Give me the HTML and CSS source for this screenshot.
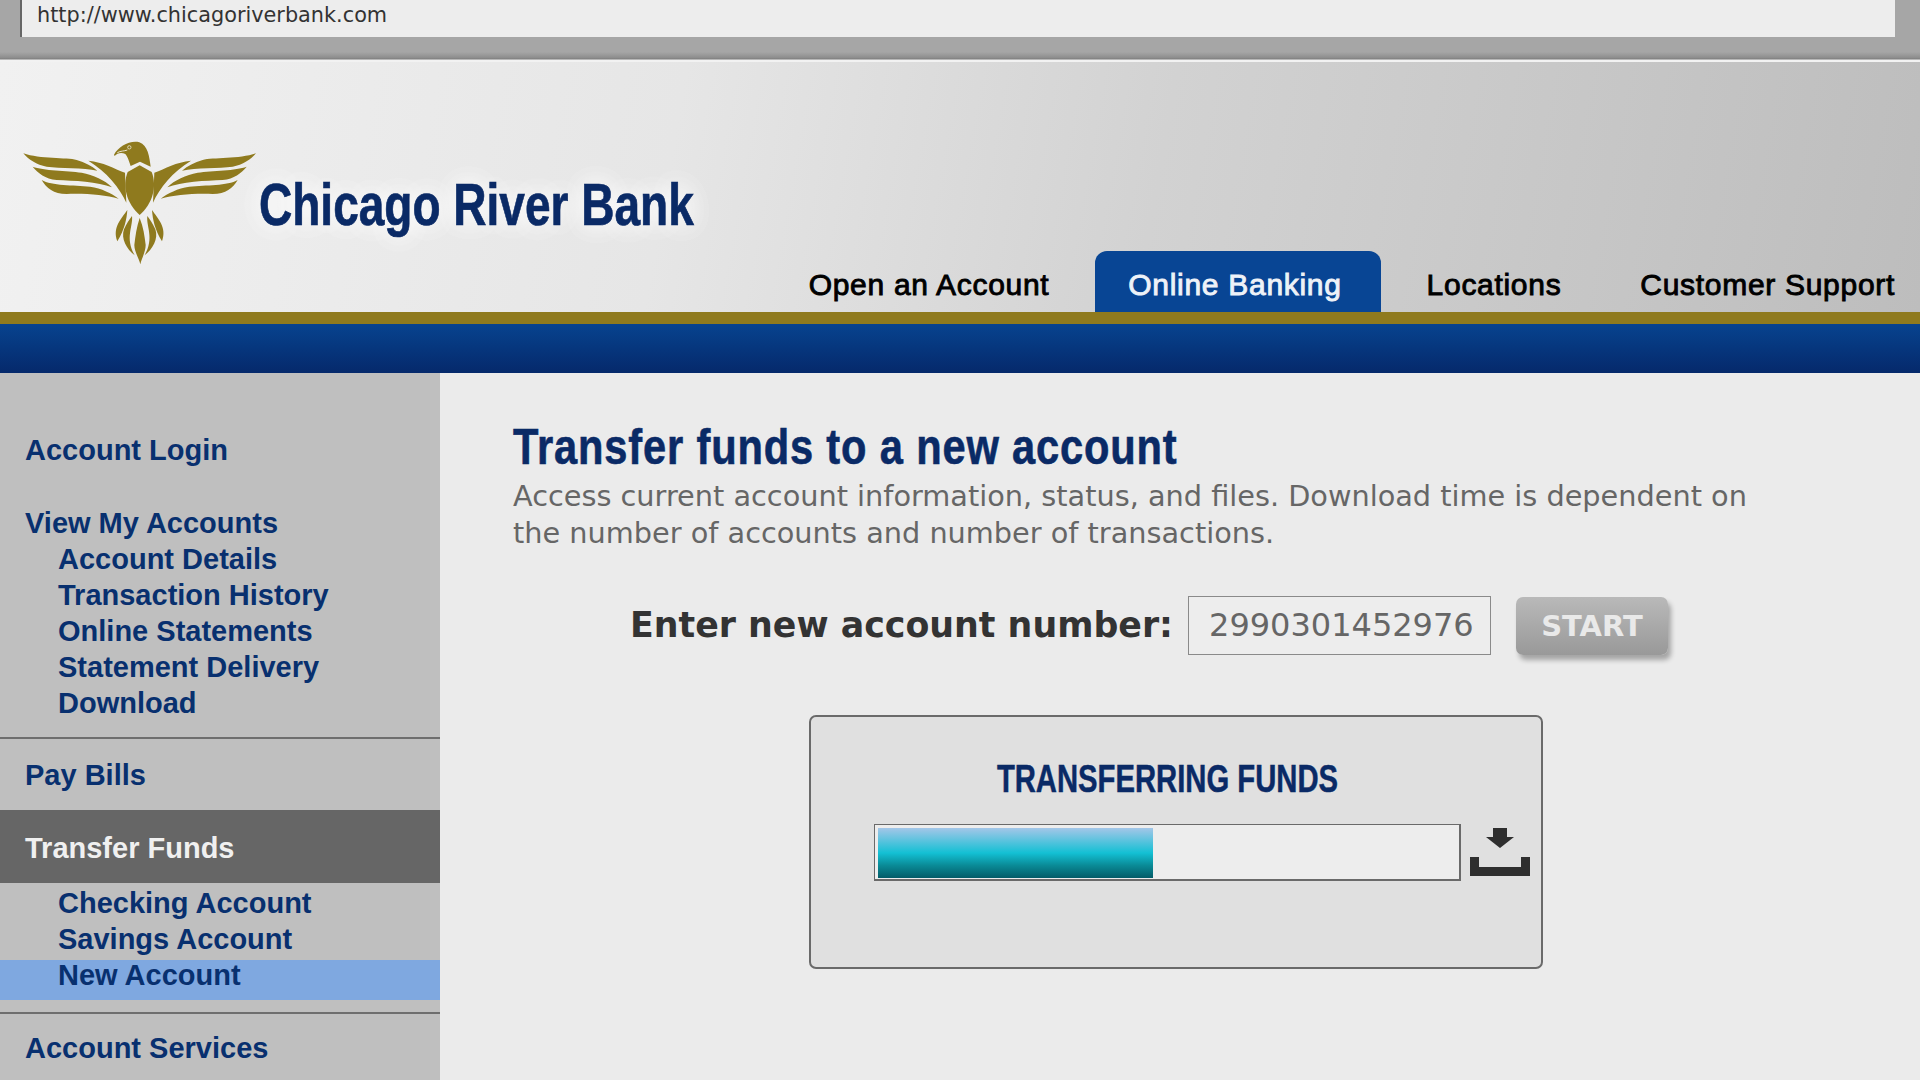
FILE: index.html
```html
<!DOCTYPE html>
<html lang="en">
<head>
<meta charset="utf-8">
<title>Chicago River Bank</title>
<link rel="stylesheet" href="styles.css">
</head>
<body>
<div class="browser-bar"><div class="url">http://www.chicagoriverbank.com</div></div>
<header class="site-header">
  <div class="logo">
    <svg class="eagle" viewBox="0 0 780 420" aria-hidden="true">
      <defs>
        <g id="half">
          <path d="M40 70C90 88 170 82 200 90C225 97 245 108 262 122C220 112 150 116 110 110C80 105 55 88 40 70Z"/>
          <path d="M68 110C100 122 170 122 215 128C250 135 285 150 306 172C265 155 190 152 140 150C105 146 85 130 68 110Z"/>
          <path d="M95 150C125 168 190 165 240 170C275 175 305 190 326 206C285 195 230 190 170 192C130 192 110 175 95 150Z"/>
          <path d="M235 92C280 96 312 116 345 128L349 218C330 175 290 125 235 92Z"/>
          <path d="M352 240C335 265 306 292 322 334C344 298 350 268 352 240Z"/>
          <path d="M366 258C370 290 344 322 374 376C350 358 332 326 342 298C350 280 358 268 366 258Z"/>
        </g>
      </defs>
      <use href="#half"/>
      <use href="#half" transform="translate(778 0) scale(-1 1)"/>
      <path d="M389 106L425 126C442 170 428 220 389 255C350 220 336 170 353 126Z"/>
      <path d="M312 74C325 50 360 30 388 37C414 46 418 80 422 110L390 95L362 108C356 90 352 78 346 72C335 66 322 68 314 78Z"/>
      <path d="M389 264C400 290 404 320 407 345C407 365 395 385 391 403C387 385 373 365 373 345C376 320 380 290 389 264Z"/>
      <circle class="eye" cx="358" cy="52" r="5"/>
      <path class="beak" d="M322 68C332 62 342 64 352 60"/>
    </svg>
    <span class="logo-text">Chicago River Bank</span>
  </div>
  <nav class="tabs">
    <a class="tab">Open an Account</a>
    <a class="tab active">Online Banking</a>
    <a class="tab">Locations</a>
    <a class="tab last">Customer Support</a>
  </nav>
</header>
<div class="gold"></div>
<div class="blue"></div>
<div class="layout">
  <aside class="sidebar">
    <a class="top first">Account Login</a>
    <a class="top gap">View My Accounts</a>
    <a class="sub">Account Details</a>
    <a class="sub">Transaction History</a>
    <a class="sub">Online Statements</a>
    <a class="sub">Statement Delivery</a>
    <a class="sub">Download</a>
    <hr class="rule rule-a">
    <a class="top bills">Pay Bills</a>
    <a class="current">Transfer Funds</a>
    <a class="sub after">Checking Account</a>
    <a class="sub">Savings Account</a>
    <a class="sub selected">New Account</a>
    <hr class="rule rule-b">
    <a class="top services">Account Services</a>
  </aside>
  <main class="content">
    <h1>Transfer funds to a new account</h1>
    <p class="lead">Access current account information, status, and files. Download time is dependent on the number of accounts and number of transactions.</p>
    <div class="form-row">
      <label class="field-label">Enter new account number:</label>
      <div class="field">2990301452976</div>
      <div class="start">START</div>
    </div>
    <section class="panel">
      <h2>TRANSFERRING FUNDS</h2>
      <div class="progress-row">
        <div class="track"><div class="fill"></div></div>
        <svg class="dl" viewBox="0 0 60 48" aria-hidden="true">
          <path d="M23 0H37V9H44L30 20L16 9H23Z"/>
          <path d="M0 29H9V39H51V29H60V48H0Z"/>
        </svg>
      </div>
    </section>
  </main>
</div>
</body>
</html>
```
FILE: styles.css
```css
* { box-sizing: border-box; }
html, body { margin: 0; height: 1080px; overflow: hidden; }
body { background: #ebebeb; font-family: "Liberation Sans", Arial, sans-serif; display: flex; flex-direction: column; }

.browser-bar { height: 62px; flex: none; background: linear-gradient(#a6a6a6 0 52px, #8c8c8c 58px, #7d7d7d 59px, #f2f2f2 60px); padding: 0 25px 0 20px; }
.url { height: 37px; background: #ededed; border-left: 2px solid #666; padding-left: 15px; font: 20.8px/30px "DejaVu Sans", sans-serif; color: #333; }

.site-header { height: 250px; flex: none; display: flex; justify-content: space-between; align-items: flex-end; background: linear-gradient(100deg, #f1f1f1 0%, #e6e6e6 35%, #d2d2d2 60%, #bdbdbd 100%); padding-left: 10px; }
.logo { display: flex; align-items: flex-start; align-self: flex-start; padding-top: 68px; width: 720px; flex: none; }
.eagle { width: 260px; height: 140px; fill: #8f7a1e; flex: none; }
.eye { fill: none; stroke: #e8e4d0; stroke-width: 2.5; }
.beak { fill: none; stroke: #e8e4d0; stroke-width: 3; }
.logo-text { font: bold 59px/70px "Liberation Sans", sans-serif; color: #0a2a66; margin: 40px 0 0 -11px; -webkit-text-stroke: .7px currentColor; text-shadow: 0 0 30px #fff, 0 0 30px #fff; white-space: nowrap; transform: scaleX(.78); transform-origin: left center; }

.tabs { display: flex; align-items: flex-end; gap: 13px; height: 61px; flex: none; }
.tab { padding: 0 33px; height: 61px; font-size: 30px; line-height: 67px; letter-spacing: .7px; -webkit-text-stroke: .9px currentColor; color: #000; white-space: nowrap; }
.tab.active { background: #084594; color: #eef2f8; border-radius: 12px 12px 0 0; padding-right: 39px; }
.tab.last { padding-right: 25px; }

.gold { height: 12px; flex: none; background: #8f7a1e; }
.blue { height: 49px; flex: none; background: linear-gradient(#07438f, #05296b); }

.layout { flex: 1; display: flex; min-height: 0; }
.sidebar { width: 440px; flex: none; background: #bfbfbf; display: flex; flex-direction: column; font-size: 29px; font-weight: bold; color: #08306f; overflow: hidden; }
.sidebar a { display: block; height: 36px; line-height: 36px; white-space: nowrap; }
.top { padding-left: 25px; }
.first { margin-top: 59px; }
.gap { margin-top: 37px; }
.sub { padding-left: 58px; }
.rule { height: 2px; margin: 0; border: 0; background: #6e6e6e; flex: none; }
.rule-a { margin-top: 16px; }
.bills { margin-top: 18px; }
.sidebar .current { background: #666; color: #f0f0f0; height: 73px; line-height: 76px; padding-left: 25px; margin-top: 17px; }
.after { margin-top: 2px; }
.sidebar .selected { background: #7fa8e0; height: 40px; line-height: 30px; margin-top: 3px; }
.rule-b { margin-top: 12px; }
.services { margin-top: 16px; }

.content { flex: 1; padding: 47px 0 0 73px; min-width: 0; }
h1 { margin: 0; font: bold 50px/54px "Liberation Sans", sans-serif; color: #0a2a66; letter-spacing: 1px; -webkit-text-stroke: .6px currentColor; white-space: nowrap; transform: scaleX(.833); transform-origin: left center; }
.lead { margin: 4px 0 0; width: 1270px; font: 28.75px/37px "DejaVu Sans", sans-serif; color: #666; }
.form-row { display: flex; align-items: center; margin: 44px 0 0 117px; }
.field-label { font: bold 34.8px/59px "DejaVu Sans", sans-serif; color: #333; white-space: nowrap; margin-right: 15px; }
.field { width: 303px; height: 59px; border: 1px solid #8a8a8a; background: #ededed; color: #666; font: 32px/57px "DejaVu Sans", sans-serif; padding-left: 20px; flex: none; }
.start { width: 152px; height: 58px; margin-left: 25px; border-radius: 7px; background: linear-gradient(#b9b9b9, #999); box-shadow: 3px 5px 5px rgba(0,0,0,.3); color: #e9e9e9; font: bold 29px/59px "DejaVu Sans", sans-serif; text-align: center; flex: none; }

.panel { width: 734px; height: 254px; margin: 60px 0 0 296px; background: #e0e0e0; border: 2px solid #6a6a6a; border-radius: 7px; padding: 37px 0 0 63px; }
h2 { margin: 0; width: 587px; text-align: center; font: bold 39px/50px "Liberation Sans", sans-serif; color: #0a2a66; -webkit-text-stroke: .5px currentColor; white-space: nowrap; transform: scaleX(.75); }
.progress-row { display: flex; align-items: flex-start; margin-top: 20px; }
.track { width: 587px; height: 57px; border: 2px solid #6a6a6a; border-width: 1px 2px 2px 1px; background: #ededed; padding: 3px; flex: none; }
.fill { width: 275px; height: 50px; background: linear-gradient(#a4c6e8 0%, #13c0d4 50%, #0a8a96 75%, #045c68 100%); }
.dl { width: 60px; height: 48px; margin: 4px 0 0 9px; fill: #2f2f2f; flex: none; }
```
